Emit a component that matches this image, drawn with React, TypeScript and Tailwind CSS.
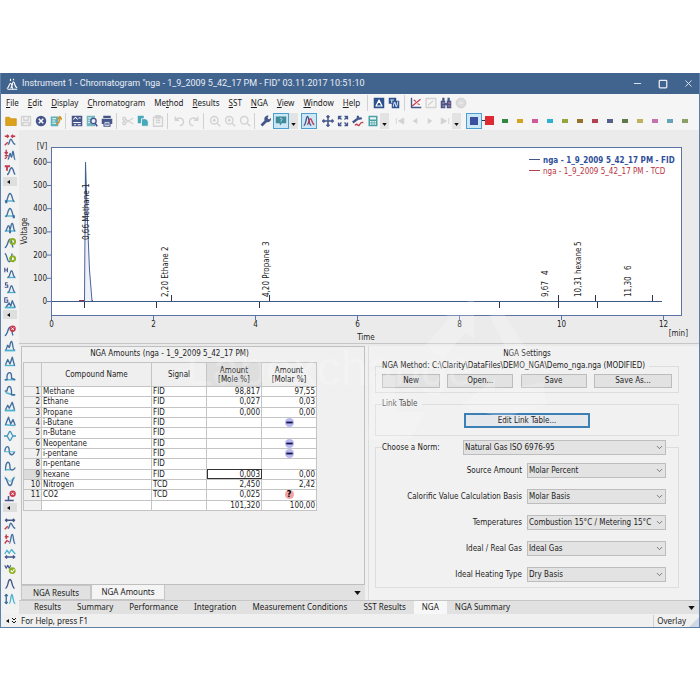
import type { ReactNode } from 'react';
import { ChevronDown, Minus, Square, X } from 'lucide-react';

const NAVY = '#44568a';
const TEAL = '#46a8b8';
const RED = '#c43a4e';
const GREEN = '#8db01e';
const OFF = '#d2d2d2';

function Svg({ children, size = 'size-3' }: { children: ReactNode; size?: string }) {
  return (
    <svg viewBox="0 0 16 16" className={size} fill="none" strokeWidth="1.8" strokeLinejoin="round" aria-hidden="true">
      {children}
    </svg>
  );
}

/* ---------- menu ---------- */

const MENU = [
  ['', 'F', 'ile'],
  ['', 'E', 'dit'],
  ['', 'D', 'isplay'],
  ['', 'C', 'hromatogram'],
  ['Me', 't', 'hod'],
  ['', 'R', 'esults'],
  ['', 'S', 'ST'],
  ['', 'N', 'GA'],
  ['', 'V', 'iew'],
  ['', 'W', 'indow'],
  ['', 'H', 'elp'],
];

const MENU_ICONS: { name: string; art: ReactNode }[] = [
  { name: 'Instrument', art: <><path d="M1 1h14v14H1z" fill="#2c5390" /><path d="M8 4l-4 8h8zM8 4v4" stroke="#fff" strokeWidth="1.6" /></> },
  { name: 'Calibration', art: <><path d="M1 1h10v4h4v10H5V9H1z" fill="#2c5390" /><path d="M3 4h5M5 4v4M7 13c1-6 2-8 3-3s2 3 3-4" stroke="#cfdcf0" strokeWidth="1.4" /></> },
];

const MENU_ICONS_2: { name: string; art: ReactNode }[] = [
  { name: 'Linearity', art: <><path d="M2 1v13h13" stroke={NAVY} /><path d="M3 12L14 3M5 4l3 2M10 9l3 1" stroke={RED} strokeWidth="1.5" /></> },
  { name: 'Curve', art: <><path d="M1.500 2h13v12h-13z" stroke={OFF} /><path d="M4 11l7-6" stroke={OFF} /></> },
  { name: 'Batch', art: <><path d="M1 5h6v10H1zM9 5h6v10H9zM3 1h3v5H3zM10 1h3v5h-3zM6 8h4v3H6z" fill={NAVY} /><path d="M3 8h3M11 8h3M3 12h3M11 12h3" stroke="#e58a9b" strokeWidth="1.4" /></> },
  { name: 'Record', art: <><circle cx="8" cy="8" r="6.500" fill="#dcdcdc" stroke="#cacaca" strokeWidth="1" /><path d="M5 8h6" stroke="#ececec" /></> },
];

/* ---------- toolbar ---------- */

type Tool = { name?: string; kind?: 'sep' | 'gap' | 'drop' | 'on'; art?: ReactNode };

const magnifier = <><circle cx="7" cy="7" r="5" stroke={OFF} /><path d="M11 11l4 4M5 7h4M7 5v4" stroke={OFF} /></>;

const TOOLS: Tool[] = [
  { name: 'Open', art: <path d="M1 3h5l1.500 2H15v9H1z" fill="#dda21c" stroke="#c98f10" strokeWidth="1" /> },
  { name: 'Save', art: <path d="M2 2h12v12H2zM5 2v5h6V2M4 14v-4h8v4" stroke={OFF} /> },
  { name: 'Close', art: <><circle cx="8" cy="8" r="7" fill={NAVY} /><path d="M5 5l6 6M11 5l-6 6" stroke="#fff" strokeWidth="2" /></> },
  { name: 'Export', art: <><path d="M1 2h10v13H1z" fill="#5fb0bb" /><path d="M3 5h5M3 8h4M3 11h5" stroke="#fff" strokeWidth="1.300" /><path d="M8 12c4 0 5-3 5-8M10 6l3-4 3 4" stroke="#c9962c" strokeWidth="2" /></> },
  { kind: 'sep' },
  { name: 'Report', art: <><path d="M1 1h14v14H1z" fill={NAVY} /><path d="M3 6l3-3 3 3M10 4h3M3 10h10M4 13h3M9 13h4" stroke="#fff" strokeWidth="1.400" /></> },
  { name: 'Preview', art: <><path d="M1 1h11v14H1z" fill="#74b7c0" /><path d="M3 4h4M3 7h2M3 10h2" stroke="#fff" strokeWidth="1.300" /><circle cx="10" cy="8" r="3.500" fill="#eef" stroke={NAVY} /><path d="M12 11l3 4" stroke={NAVY} strokeWidth="2.300" /></> },
  { name: 'Print', art: <><path d="M3 1h10v3H3zM1 5h14v7H1z" fill={NAVY} /><path d="M4 9h8v6H4z" fill="#f4f4f4" stroke={NAVY} strokeWidth="1.500" /><path d="M5.500 12h5" stroke={NAVY} /></> },
  { kind: 'sep' },
  { name: 'Cut', art: <><path d="M5 6l10 6M5 10l10-6" stroke={OFF} /><circle cx="3" cy="5" r="2" stroke={OFF} /><circle cx="3" cy="11" r="2" stroke={OFF} /></> },
  { name: 'Copy', art: <><path d="M1 1h8v10H1z" fill={TEAL} /><path d="M6 5h6l3 3v7H6z" fill={TEAL} stroke="#f4f4f4" strokeWidth="1.200" /></> },
  { name: 'Paste', art: <><path d="M2 3h12v12H2zM5 1h6v3H5z" stroke={OFF} /><path d="M5 7h6M5 10h6" stroke={OFF} /></> },
  { kind: 'sep' },
  { name: 'Undo', art: <path d="M3 2v5h5M3 7c4-5 11-3 11 2 0 3-2 5-5 5" stroke={OFF} /> },
  { name: 'Redo', art: <path d="M13 2v5H8M13 7C9 2 2 4 2 9c0 3 2 5 5 5" stroke={OFF} /> },
  { kind: 'sep' },
  { name: 'Zoom in', art: magnifier },
  { name: 'Zoom out', art: magnifier },
  { name: 'Zoom reset', art: <><circle cx="7" cy="7" r="5" stroke={OFF} /><path d="M11 11l4 4" stroke={OFF} /></> },
  { kind: 'sep' },
  { name: 'Properties', art: <><path d="M2 14l7-7" stroke={NAVY} strokeWidth="3.600" /><path d="M14.500 4a4.500 4.500 0 1 1-3-3L10 4l2 2z" fill={NAVY} /></> },
  { kind: 'on', name: 'Labels', art: <><path d="M1 2h14v9H9l-2 3-1-3H1z" fill="#3e8c9c" /><path d="M6.500 5c1-1 3-.5 3 .7 0 1-1.500 1-1.500 2.300M8 8.800v1" stroke="#bfe2f2" strokeWidth="1.300" /></> },
  { kind: 'drop', name: 'Label options' },
  { kind: 'gap' },
  { kind: 'on', name: 'Overlay', art: <><path d="M1 14c3 0 3-12 5-12s2 12 5 12" stroke={NAVY} /><path d="M6 13c2-3 2-8 4-8s2 7 5 8" stroke={RED} /></> },
  { kind: 'gap' },
  { name: 'Move', art: <path d="M8 1v14M1 8h14M6 3l2-2 2 2M6 13l2 2 2-2M3 6L1 8l2 2M13 6l2 2-2 2" stroke={NAVY} strokeWidth="2" /> },
  { name: 'Fit', art: <path d="M2 6V2h4M10 2h4v4M14 10v4h-4M6 14H2v-4M2 2l4 4M14 2l-4 4M14 14l-4-4M2 14l4-4" stroke={NAVY} strokeWidth="1.700" /> },
  { name: 'Scale', art: <><path d="M1 10l8-6M8 1c-1 3 1 5 5 3" stroke={NAVY} strokeWidth="3" /><path d="M4 14c3-5 4 3 6-1s3-3 5-3" stroke={RED} /></> },
  { name: 'Calculator', art: <><path d="M2 1h12v14H2z" fill="#4aa0a4" /><path d="M4 3h8v3H4z" fill="#eaf6f6" /><path d="M4 9h8M4 12h8" stroke="#eaf6f6" strokeDasharray="2 1" /></> },
  { kind: 'drop', name: 'Calculator options' },
  { kind: 'gap' },
  { name: 'First', art: <path d="M3 4v8M13 4v8L6 8z" fill={OFF} stroke={OFF} strokeWidth="1.200" /> },
  { name: 'Previous', art: <path d="M11 4v8L5 8z" fill={OFF} /> },
  { name: 'Next', art: <path d="M5 4v8l6-4z" fill={OFF} /> },
  { name: 'Last', art: <path d="M13 4v8M3 4v8l7-4z" fill={OFF} stroke={OFF} strokeWidth="1.200" /> },
  { kind: 'drop', name: 'Signal options' },
];

const SWATCHES = [
  'bg-[#2f8a3d]', 'bg-[#d3a321]', 'bg-[#cf5a9b]', 'bg-[#2fb0d2]', 'bg-[#92a63c]', 'bg-[#937329]', 'bg-[#b0434f]',
  'bg-[#565e8a]', 'bg-[#5d7a4a]', 'bg-[#bcb25c]', 'bg-[#c671b2]', 'bg-[#68a2b8]', 'bg-[#8ba065]',
];

function ToolItem({ tool }: { tool: Tool }) {
  if (tool.kind === 'sep') return <span className="ml-[2px] mr-[3px] h-4 w-px bg-[#d0d0d0]" />;
  if (tool.kind === 'gap') return <span className="w-[3px]" />;
  if (tool.kind === 'drop') {
    return (
      <button aria-label={tool.name} className="flex h-4 w-[9px] items-end justify-center bg-[#e3e3e3] pb-[3px]">
        <svg viewBox="0 0 6 4" className="h-[3px] w-[5px]"><path d="M0 0h6L3 4z" fill="#111" /></svg>
      </button>
    );
  }
  if (tool.kind === 'on') {
    return (
      <button aria-label={tool.name} className="flex size-4 items-center justify-center border border-[#4a9fd0] bg-[#cce7f5]">
        <Svg>{tool.art}</Svg>
      </button>
    );
  }
  return (
    <button aria-label={tool.name} className="flex h-4 w-[15px] items-center justify-center">
      <Svg>{tool.art}</Svg>
    </button>
  );
}

/* ---------- integration side bar ---------- */

const BLUE = '#3f6fa0';
const CYAN = '#4bb3cf';
const peak = 'M2 13c3 0 3-11 6-11s3 11 6 11';
const cross = <><circle cx="11.500" cy="5" r="4.200" fill="#c93a52" /><path d="M9.800 3.300l3.400 3.400M13.200 3.300L9.800 6.700" stroke="#fff" strokeWidth="1.200" /></>;

const SIDE: { name: string; art: ReactNode }[][] = [
  [
    { name: 'Peak width', art: <><path d="M5 14c3 0 2-7 4-7s2 6 6 7" stroke={BLUE} /><path d="M1 3h5M10 3h5M4 1L6 3 4 5M12 1l-2 2 2 2" stroke={RED} strokeWidth="2" /><path d="M1 15l4-4" stroke={RED} /></> },
    { name: 'Threshold', art: <><path d="M5 14c2 0 2-8 3-8s1 5 2 5 1-8 2-8 1 11 3 11" stroke={BLUE} /><path d="M3 1v5M1 4l2 3 2-3M1 9h5M1 13l3-2" stroke={RED} /></> },
    { name: 'Tangent', art: <><path d="M4 14c4 0 3-9 6-9s2 7 5 9" stroke={BLUE} /><path d="M1 3h7M4 3v6" stroke={RED} strokeWidth="2.400" /></> },
  ],
  [
    { name: 'Peak start', art: <><path d="M1 12h13" stroke={CYAN} /><path d={peak} stroke={BLUE} /><path d="M3 11v4" stroke={BLUE} strokeWidth="3" /></> },
    { name: 'Peak end', art: <><path d="M1 12h11" stroke={CYAN} /><path d={peak} stroke={BLUE} /><path d="M13 11v4" stroke={BLUE} strokeWidth="3" /></> },
    { name: 'Valley', art: <><path d="M1 12h14" stroke={CYAN} /><path d="M2 12c2 0 2-7 4-7s1 5 2 5 1-8 3-8 1 10 4 10" stroke={BLUE} /><path d="M8 11v4" stroke={BLUE} strokeWidth="2.600" /></> },
    { name: 'Add positive', art: <><path d="M1 14c4 0 4-11 7-11s2 6 4 11" stroke={BLUE} /><circle cx="11.500" cy="6" r="3.300" stroke={GREEN} strokeWidth="2.600" /></> },
    { name: 'Add negative', art: <><path d="M1 2c3 0 3 11 6 11s2-6 4-11" stroke={BLUE} /><circle cx="11.500" cy="9" r="3.300" stroke={GREEN} strokeWidth="2.600" /></> },
    { name: 'Height', art: <><path d="M1 1v6M4.500 1v6M1 4h4" stroke={NAVY} strokeWidth="1.500" /><path d="M4 14h11" stroke={CYAN} /><path d="M5 14c3 0 3-9 5-9s2 9 5 9" stroke={BLUE} /></> },
    { name: 'Slope', art: <><path d="M5 1H2v3h3v3H1" stroke={NAVY} strokeWidth="1.500" /><path d="M4 14h11" stroke={CYAN} /><path d="M5 14c3 0 3-9 5-9s2 9 5 9" stroke={BLUE} /></> },
    { name: 'Group', art: <><path d="M5 1H1v6h4V4H3" stroke={NAVY} strokeWidth="1.500" /><path d="M1 14h14" stroke={CYAN} strokeWidth="2.400" /><path d="M3 13l4-5 2 4 2-7 4 9" stroke={BLUE} /></> },
  ],
  [
    { name: 'Delete peak', art: <><path d="M1 14c4 0 4-11 7-11s2 6 4 11" stroke={BLUE} />{cross}</> },
    { name: 'Together', art: <><path d="M1 14h14" stroke={CYAN} strokeWidth="2.400" /><path d="M2 13c2 0 2-6 3-6s1 3 2 3 1-8 3-8 1 11 4 11" stroke={BLUE} /></> },
    { name: 'Separate', art: <><path d="M1 14h14" stroke={CYAN} /><path d="M2 13l3-7 3 6 3-9 3 11" stroke={BLUE} /></> },
    { name: 'Forward', art: <><path d="M1 13h14" stroke={CYAN} /><path d="M1 13h3V8c1-6 6-6 6 0v3l5 2" stroke={BLUE} /></> },
    { name: 'Backward', art: <><path d="M2 10l12 4" stroke={CYAN} /><path d="M1 8h3c1-8 5-8 6 0v5h5" stroke={BLUE} /></> },
    { name: 'Front tangent', art: <><path d="M1 14h14" stroke={CYAN} strokeWidth="2.500" /><path d="M2 13l3-6 2 4 4-8 3 10" stroke={BLUE} /></> },
    { name: 'Tail tangent', art: <><path d="M1 13l13 1" stroke={CYAN} /><path d="M2 13l4-10 3 9 3-6 3 8" stroke={BLUE} /></> },
    { name: 'Clamp', art: <path d="M0 8h3c3 0 3-6 5-6s2 6 5 6h3M3 8c3 0 3 6 5 6s2-6 5-6" stroke="#4397bd" /> },
    { name: 'Force peak', art: <><path d="M1 9c1-9 6-9 6-1 0 6 5 7 7 1" stroke={BLUE} /><path d="M1 9h14" stroke={CYAN} strokeWidth="1.200" /></> },
    { name: 'Negative peak', art: <><path d="M2 14c0-14 6-14 6-4 0 5 5 4 7 0" stroke={BLUE} /><path d="M2 13h6" stroke={CYAN} /></> },
    { name: 'Reject', art: <><path d="M1 4c4 0 3 10 7 10s2-10 6-10" stroke={BLUE} /><path d="M1 2l7 7 6-7" stroke={CYAN} strokeWidth="1.200" /></> },
    { name: 'Remove baseline', art: <><path d="M1 14h12M6 14V8" stroke={NAVY} strokeWidth="2" />{cross}</> },
  ],
  [
    { name: 'Shift time', art: <><path d="M5 14c3 0 2-7 4-7s2 6 6 7" stroke={BLUE} /><path d="M2 3h12M4 1L2 3l2 2M12 1l2 2-2 2" stroke={NAVY} strokeWidth="2" /><path d="M1 15l4-4" stroke={RED} /></> },
    { name: 'Shift signal', art: <><path d="M7 14c2 0 2-12 4-12s1 12 4 12" stroke={BLUE} /><path d="M1 5h5M3 2v6M1 14l3-4 3 2" stroke={RED} /></> },
    { name: 'Stretch', art: <><path d="M1 8l3-5 3 4 3-5 5 6" stroke={CYAN} /><path d="M1 12h14M4 10l-2 2 2 2M12 10l2 2-2 2" stroke={NAVY} /></> },
    { name: 'Noise', art: <><path d="M1 3l2 4 2-4 2 4 2-4" stroke={NAVY} strokeWidth="1.500" /><circle cx="11" cy="10" r="4.500" fill={GREEN} /><path d="M9 10l2 2 3-4" stroke="#fff" strokeWidth="1.500" /></> },
    { name: 'Gaussian', art: <path d="M2 14c4-2 3-12 6-12s2 10 6 12" stroke={NAVY} /> },
    { name: 'Normalize', art: <><path d="M3 2v12M1 4l2-2 2 2M1 12l2 2 2-2" stroke={BLUE} /><path d="M7 14c2 0 2-12 3.500-12S12 14 15 14" stroke={CYAN} /></> },
  ],
];

function SideBar() {
  return (
    <aside className="w-[18px] shrink-0 bg-[#f2f2f2] pb-1 pt-[2px]">
      {SIDE.map((group, i) => (
        <div key={i} className="mb-1 flex flex-col items-center">
          {group.map(item => (
            <button key={item.name} aria-label={item.name} className="flex h-[15px] w-full items-center justify-center">
              <Svg>{item.art}</Svg>
            </button>
          ))}
          {i < 3 && (
            <button aria-label="Collapse group" className="flex h-[9px] w-[14px] items-center bg-[#dedede] pl-1">
              <svg viewBox="0 0 3 4" className="h-1 w-[3px]"><path d="M3 0v4L0 2z" fill="#111" /></svg>
            </button>
          )}
        </div>
      ))}
    </aside>
  );
}

/* ---------- chromatogram ---------- */

const PEAKS = [
  { x: 89, y: 240, text: '0,66 Methane', no: '1', noY: 188 },
  { x: 168, y: 297, text: '2,20 Ethane', no: '2', noY: 251 },
  { x: 269, y: 297, text: '4,20 Propane', no: '3', noY: 246 },
  { x: 548, y: 297, text: '9,67', no: '4', noY: 275 },
  { x: 581, y: 297, text: '10,31 hexane', no: '5', noY: 246 },
  { x: 631, y: 297, text: '11,30', no: '6', noY: 270 },
];

function Chromatogram() {
  return (
    <svg viewBox="19 130 680 213" className="block w-full bg-[#ebebeb]" fontSize="8" fill="#1c1c1c" role="img" aria-label="Chromatogram">
      <rect x="51.500" y="147.500" width="630" height="168" fill="#fff" stroke="#5b73a5" />
      {[0, 100, 200, 300, 400, 500, 600].map(v => (
        <g key={v}>
          <path d={`M47 ${301.5 - v * 0.232}h4`} stroke="#5b73a5" />
          <text x="47" y={304 - v * 0.232} textAnchor="end">{v}</text>
        </g>
      ))}
      {[0, 2, 4, 6, 8, 10, 12].map(v => (
        <g key={v}>
          <path d={`M${51.5 + v * 51} 316v4`} stroke="#5b73a5" />
          <text x={51.5 + v * 51} y="327" textAnchor="middle">{v}</text>
        </g>
      ))}
      <text x="42" y="149" textAnchor="middle">[V]</text>
      <text x="366" y="340" textAnchor="middle">Time</text>
      <text x="688" y="336" textAnchor="end">[min]</text>
      <text transform="translate(27 231) rotate(-90)" textAnchor="middle">Voltage</text>

      <path d="M52 301.500h610" stroke="#3c5a85" />
      <path d="M79 300.500h14" stroke="#a03048" />
      <path d="M84.500 301L85.500 162l2 60 2 48 2.500 31" fill="#eef1f8" stroke="#4c639c" />
      <path d="M85.500 163v30" stroke="#41608f" />
      <path d="M84.500 302v6M156.500 302v6M259.500 302v6M499.500 302v6M558.500 295v13M597.500 302v6M171.500 295v6M269.500 295v6M595.500 295v6M652.500 295v6" stroke="#2b3448" />
      {PEAKS.map(p => (
        <g key={p.no}>
          <text transform={`translate(${p.x} ${p.y}) rotate(-90)`}>{p.text}</text>
          <text transform={`translate(${p.x} ${p.noY}) rotate(-90)`}>{p.no}</text>
        </g>
      ))}

      <path d="M529 159.500h11" stroke="#44568a" />
      <path d="M529 170.500h11" stroke="#b5434f" />
      <text x="543" y="163" fill="#2f4f9a" fontWeight="bold">nga - 1_9_2009 5_42_17 PM - FID</text>
      <text x="543" y="174" fill="#b8333f">nga - 1_9_2009 5_42_17 PM - TCD</text>
    </svg>
  );
}

/* ---------- amounts table ---------- */

const ROWS: [string, string, string, string][] = [
  ['Methane', 'FID', '98,817', '97,55'],
  ['Ethane', 'FID', '0,027', '0,03'],
  ['Propane', 'FID', '0,000', '0,00'],
  ['i-Butane', 'FID', '', 'minus'],
  ['n-Butane', 'FID', '', ''],
  ['Neopentane', 'FID', '', 'minus'],
  ['i-pentane', 'FID', '', 'minus'],
  ['n-pentane', 'FID', '', ''],
  ['hexane', 'FID', '0,003', '0,00'],
  ['Nitrogen', 'TCD', '2,450', '2,42'],
  ['CO2', 'TCD', '0,025', 'unknown'],
];

function Molar({ value }: { value: string }) {
  if (value === 'minus') {
    return (
      <svg viewBox="0 0 10 10" className="mx-auto size-[9px]" role="img" aria-label="below range">
        <circle cx="5" cy="5" r="5" fill="#b9b8ee" />
        <path d="M1.500 5h7" stroke="#10104a" strokeWidth="2" />
      </svg>
    );
  }
  if (value === 'unknown') {
    return (
      <span className="mx-auto flex size-[9px] items-center justify-center rounded-full bg-[#f0a3a3] text-[9px] font-bold text-black">?</span>
    );
  }
  return <>{value}</>;
}

function AmountsTable() {
  const th = 'border border-[#c4c4c4] p-0 font-normal leading-[9px]';
  const td = 'border border-[#c4c4c4] px-px py-0';
  return (
    <table className="h-[149px] w-[294px] table-fixed border-collapse bg-white leading-[9px]">
      <colgroup>
        <col className="w-[18px]" />
        <col />
        <col className="w-[55px]" />
        <col className="w-[55px]" />
        <col className="w-[55px]" />
      </colgroup>
      <thead>
        <tr className="h-6 bg-[#efefef]">
          <th className={th} />
          <th className={th}>Compound Name</th>
          <th className={th}>Signal</th>
          <th className={`${th} bg-[#dedede]`}>Amount<br />[Mole %]</th>
          <th className={th}>Amount<br />[Molar %]</th>
        </tr>
      </thead>
      <tbody>
        {ROWS.map(([name, signal, mole, molar], i) => (
          <tr key={name}>
            <td className={`${td} text-right ${i === 8 ? 'bg-[#dcdcdc]' : 'bg-[#f0f0f0]'}`}>{i + 1}</td>
            <td className={td}>{name}</td>
            <td className={td}>{signal}</td>
            <td className={`${td} text-right ${i === 8 ? 'outline outline-1 -outline-offset-1 outline-[#333]' : ''}`}>{mole}</td>
            <td className={`${td} text-right`}><Molar value={molar} /></td>
          </tr>
        ))}
        <tr>
          <td className={`${td} bg-[#f0f0f0]`} />
          <td className={td} />
          <td className={td} />
          <td className={`${td} text-right`}>101,320</td>
          <td className={`${td} text-right`}>100,00</td>
        </tr>
      </tbody>
    </table>
  );
}

/* ---------- settings ---------- */

const FIELDS = [
  { id: 'source', label: 'Source Amount', value: 'Molar Percent' },
  { id: 'basis', label: 'Calorific Value Calculation Basis', value: 'Molar Basis' },
  { id: 'temps', label: 'Temperatures', value: 'Combustion 15°C / Metering 15°C' },
  { id: 'gas', label: 'Ideal / Real Gas', value: 'Ideal Gas' },
  { id: 'heating', label: 'Ideal Heating Type', value: 'Dry Basis' },
];

function Select({ id, value, width }: { id: string; value: string; width: string }) {
  return (
    <span className={`relative block h-[15px] ${width}`}>
      <select id={id} defaultValue={value} className="block h-full w-full appearance-none border border-[#bdbdbd] bg-[#e3e3e3] pl-px leading-[12px]">
        <option>{value}</option>
      </select>
      <ChevronDown className="pointer-events-none absolute right-[2px] top-[3px] size-[9px] text-[#555]" />
    </span>
  );
}

function NgaSettings() {
  const btn = 'h-[14px] border border-[#bcbcbc] bg-[#e2e2e2] leading-[12px]';
  const box = 'border border-[#dddddd] px-[6px]';
  return (
    <section className="flex-1 border-l border-[#dcdcdc] bg-[#f1f1f1] pl-[6px] pr-5">
      <h2 className="h-[15px] pt-[2px] text-center leading-[12px]">NGA Settings</h2>

      <fieldset className={`${box} pb-1`}>
        <legend className="h-[10px] pr-1 leading-[10px]">NGA Method: C:\Clarity\DataFiles\DEMO_NGA\Demo_nga.nga (MODIFIED)</legend>
        <div className="flex justify-between pt-[3px]">
          <button className={`${btn} w-[58px]`}>New</button>
          <button className={`${btn} w-[66px]`}>Open...</button>
          <button className={`${btn} w-[66px]`}>Save</button>
          <button className={`${btn} w-[78px]`}>Save As...</button>
        </div>
      </fieldset>

      <fieldset className={`${box} mt-[6px] pb-[7px]`}>
        <legend className="h-[10px] pr-1 leading-[10px] text-[#555]">Link Table</legend>
        <div className="flex justify-center pt-1">
          <button className="h-[15px] w-[126px] border-2 border-[#3c7fb5] bg-[#e4e8ec] leading-[11px]">Edit Link Table...</button>
        </div>
      </fieldset>

      <fieldset className={`${box} mt-1 pb-[5px]`}>
        <legend className="flex w-[284px] items-center justify-between">
          <label htmlFor="norm">Choose a Norm:</label>
          <Select id="norm" value="Natural Gas ISO 6976-95" width="w-[203px]" />
        </legend>
        <div className="flex flex-col gap-[11px] pr-[6px] pt-2">
          {FIELDS.map(f => (
            <div key={f.id} className="flex items-center justify-end gap-[5px]">
              <label htmlFor={f.id}>{f.label}</label>
              <Select id={f.id} value={f.value} width="w-[139px]" />
            </div>
          ))}
        </div>
      </fieldset>
    </section>
  );
}

/* ---------- window ---------- */

const TABS = ['Results', 'Summary', 'Performance', 'Integration', 'Measurement Conditions', 'SST Results', 'NGA', 'NGA Summary'];

function TabMenuButton({ label }: { label: string }) {
  return (
    <button aria-label={label} className="ml-auto mr-1 flex h-full items-center">
      <svg viewBox="0 0 8 5" className="h-1 w-[7px]"><path d="M0 0h8L4 5z" fill="#111" /></svg>
    </button>
  );
}

function Watermark() {
  return (
    <svg viewBox="0 0 420 150" className="pointer-events-none absolute left-[150px] top-[217px] w-[420px] opacity-20" fill="#fff" aria-hidden="true">
      <path d="M275 55l24-28-10-4 34-14 0 40-9-6-22 26zM338 26l14-4 34 54-16 10zM392 92l4 22-44 14-42-12 34-28v14zM222 86l22 0 0 36 30 0-14 26-44 4z" />
      <text x="35" y="95" fontSize="48" fontFamily="'Liberation Sans', sans-serif">Labexchange</text>
    </svg>
  );
}

export default function App() {
  return (
    <div className="min-h-screen bg-white pt-[73px] text-[#1c1c1c]">
      <div className="relative border-x border-b border-[#5f7fa8] bg-[#f0f0f0] font-['DejaVu_Sans_Condensed','DejaVu_Sans',sans-serif] text-[8px]">
        <header className="flex h-[21px] items-center bg-[#41648f] pl-[5px] font-['Roboto',sans-serif] text-[9px] text-[#e9eef5]">
          <svg viewBox="0 0 16 16" className="size-3" fill="none" stroke="#fff" strokeWidth="1.500" aria-hidden="true">
            <path d="M1 14c3 0 3-7 5-7s2 7 3 7M6 13c3 0 2-8 4-8s1 8 5 8M6 1v3M10 1v2M2 15h13" />
          </svg>
          <h1 className="ml-1">Instrument 1 - Chromatogram "nga - 1_9_2009 5_42_17 PM - FID" 03.11.2017 10:51:10</h1>
          <div className="ml-auto flex gap-[15px] pr-[5px]">
            <button aria-label="Minimize"><Minus className="size-[11px]" strokeWidth={2} /></button>
            <button aria-label="Maximize"><Square className="size-[10px]" strokeWidth={3} /></button>
            <button aria-label="Close"><X className="size-[11px]" strokeWidth={2} /></button>
          </div>
        </header>

        <nav className="flex h-[17px] items-center bg-[#f5f5f5] pl-px font-['Noto_Sans',sans-serif]">
          <div className="flex gap-px">
            {MENU.map(([pre, key, post]) => (
              <button key={key + post} className="px-1">{pre}<u>{key}</u>{post}</button>
            ))}
          </div>
          <span className="mx-[3px] h-4 w-px bg-[#d0d0d0]" />
          {MENU_ICONS.map(icon => (
            <button key={icon.name} aria-label={icon.name} className="flex w-[15px] justify-center"><Svg>{icon.art}</Svg></button>
          ))}
          <span className="mx-[3px] h-4 w-px bg-[#d0d0d0]" />
          {MENU_ICONS_2.map(icon => (
            <button key={icon.name} aria-label={icon.name} className="flex w-[15px] justify-center"><Svg>{icon.art}</Svg></button>
          ))}
        </nav>

        <div className="flex h-[19px] items-center bg-[#f5f5f5] pl-[2px]">
          {TOOLS.map((tool, i) => <ToolItem key={i} tool={tool} />)}
          <button aria-label="Signal 1" className="ml-[5px] flex size-4 items-center justify-center border border-[#4a9fd0] bg-[#cce7f5]">
            <span className="size-2 bg-[#3c50a0]" />
          </button>
          <button aria-label="Signal 2" className="flex h-4 w-[15px] items-center">
            <span className="h-px w-[3px] bg-[#2b3448]" />
            <span className="size-[9px] bg-[#dd2a33]" />
          </button>
          {SWATCHES.map((color, i) => (
            <button key={color} aria-label={`Signal ${i + 3}`} className="flex h-4 w-[15px] items-center justify-center">
              <span className={`h-1 w-[6px] ${color}`} />
            </button>
          ))}
        </div>

        <div className="flex">
          <SideBar />
          <div className="flex min-w-0 flex-1 flex-col">
            <Chromatogram />
            <div className="h-[3px] border-t border-[#c6c6c6] bg-[#eaeaea]" />

            <div className="flex flex-1">
              <section className="mr-[3px] flex w-[346px] flex-col pl-[2px]">
                <div className="flex-1 border border-[#bfbfbf] bg-[#f0f0f0] pl-px">
                  <h2 className="h-[15px] pr-12 text-center leading-[14px]">NGA Amounts (nga - 1_9_2009 5_42_17 PM)</h2>
                  <AmountsTable />
                </div>
                <div className="flex h-[15px] bg-[#e1e1e1] font-['Noto_Sans',sans-serif]">
                  <button className="w-[70px] border border-[#c6c6c6] leading-[12px]">NGA Results</button>
                  <button className="w-[74px] border-x border-b border-[#c6c6c6] bg-[#f4f4f4] leading-[12px]">NGA Amounts</button>
                  <TabMenuButton label="More views" />
                </div>
              </section>
              <NgaSettings />
            </div>

            <div className="flex h-[14px] border-t border-[#c6c6c6] bg-[#e1e1e1] pl-[7px] font-['Noto_Sans',sans-serif]">
              {TABS.map(tab => (
                <button key={tab} className={`px-2 pb-[2px] leading-[10px] ${tab === 'NGA' ? 'bg-[#f7f7f7]' : ''}`}>{tab}</button>
              ))}
              <TabMenuButton label="More tabs" />
            </div>
          </div>
        </div>

        <footer className="flex h-[13px] items-center pl-1 font-['Noto_Sans',sans-serif]">
          <svg viewBox="0 0 12 8" className="mr-1 h-2 w-3" aria-hidden="true">
            <path d="M4 2v4L1 4z" fill="#111" />
            <path d="M7 1l2 2 2-2M7 4l2 2 2-2" fill="none" stroke="#111" />
          </svg>
          <span>For Help, press F1</span>
          <span className="ml-auto border-l border-[#d0d0d0] px-[3px]">Overlay</span>
          <svg viewBox="0 0 10 10" className="size-[10px] self-end" aria-hidden="true"><path d="M0 10L10 0v10z" fill="#cfd9e3" /></svg>
        </footer>

        <Watermark />
      </div>
    </div>
  );
}
